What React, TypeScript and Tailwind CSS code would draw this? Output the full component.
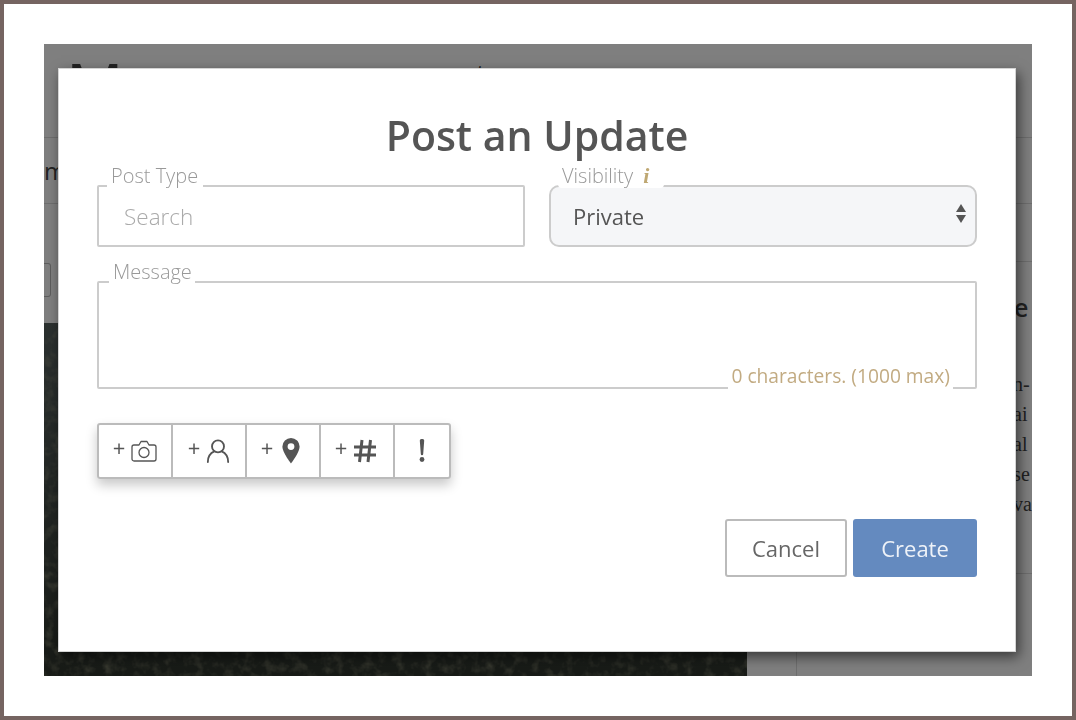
import React from 'react';

const font = { fontFamily: '"Open Sans", sans-serif' };

function PageBehind() {
  return (
    <div className="flex flex-col h-full bg-white text-[#444]">
      <div className="h-[94px] border-b border-[#ddd] flex items-start pl-[22px] pt-[2px] shrink-0">
        <span className="text-[64px] leading-[80px]">M</span>
        <span className="ml-[353px] mt-[5px] text-[24px] leading-[44px]">t</span>
      </div>
      <div className="h-[66px] border-b border-[#ddd] flex items-center overflow-hidden shrink-0">
        <span className="text-[24px] -ml-[2px] pl-[2px] w-[20px]">m</span>
      </div>
      <div className="flex flex-1 min-h-0">
        <div className="w-[703px] flex flex-col">
          <div className="h-[119px] pt-[59px]">
            <div className="w-[7px] h-[34px] border border-l-0 border-[#bbb] rounded-r-[3px]" />
          </div>
          <div className="flex-1 overflow-hidden">
            <svg width="703" height="353" className="block">
              <defs>
                <linearGradient id="shade" x1="0" y1="0" x2="0" y2="1">
                  <stop offset="0" stopColor="#586260" />
                  <stop offset="1" stopColor="#30362e" />
                </linearGradient>
                <filter id="grain">
                  <feTurbulence type="fractalNoise" baseFrequency="0.1" numOctaves="3" seed="4" />
                  <feColorMatrix values="0 0 0 0 0.36  0 0 0 0 0.36  0 0 0 0 0.24  0 0 0 1.1 -0.5" />
                </filter>
              </defs>
              <rect width="703" height="353" fill="url(#shade)" />
              <rect width="703" height="353" filter="url(#grain)" />
            </svg>
          </div>
        </div>
        <div className="w-[52px]" />
        <div className="flex-1 border-l border-[#ddd] flex flex-col">
          <div className="h-[370px] border-b border-[#ddd] flex flex-col">
            <div className="h-[58px] border-b border-[#ddd] ml-[-1px]" />
            <div className="pl-[217px] pt-[28px] text-[25px] leading-[34px] font-semibold">e</div>
            <div
              className="pl-[216px] pt-[45px] text-[20px] leading-[30px] whitespace-nowrap"
              style={{ fontFamily: '"Liberation Serif", serif' }}
            >
              <div>n-</div>
              <div>ai</div>
              <div>al</div>
              <div>se</div>
              <div>va</div>
            </div>
          </div>
        </div>
      </div>
    </div>
  );
}

function Label({ children, className }: { children: React.ReactNode; className: string }) {
  return (
    <span className={`absolute -top-[23px] h-[24px] bg-white px-1 text-[20px] leading-[24px] font-light text-[#999] whitespace-nowrap ${className}`}>
      {children}
    </span>
  );
}

function ToolCell({ plus = true, children, last }: { plus?: boolean; children: React.ReactNode; last?: boolean }) {
  return (
    <div className={`${last ? 'w-[54px]' : 'w-[74px] border-r-2 border-[#bbb]'} h-full flex items-center justify-center gap-[6px] text-[#555]`}>
      {plus && <span className="text-[22px] leading-none -mt-[9px]">+</span>}
      {children}
    </div>
  );
}

export default function App() {
  return (
    <div className="w-[1076px] h-[720px] border-4 border-[#756461] bg-white pt-[40px] pl-[40px]" style={font}>
      <div className="relative w-[988px] h-[632px] overflow-hidden">
        <PageBehind />
        <div className="absolute inset-0 bg-black/50" />
        <div className="absolute left-[14px] top-[24px] w-[958px] h-[584px] bg-white shadow-[inset_0_0_0_1px_#d4d4d4,3px_5px_12px_rgba(0,0,0,0.55)] px-[39px] pt-[40px] will-change-transform">
          <h1 className="text-center text-[41px] leading-[56px] font-semibold text-[#555] -mt-[1px]">Post an Update</h1>

          <div className="flex gap-[24px] mt-[22px]">
            <div className="relative w-[428px] h-[62px] border-2 border-[#ccc] rounded-[2px] flex items-center pl-[25px]">
              <Label className="left-[8px] w-[96px]">Post Type</Label>
              <span className="text-[22.5px] font-light text-[#aaa] pt-[1px]">Search</span>
            </div>
            <div className="relative w-[428px] h-[62px] border-2 border-[#ccc] rounded-[10px] bg-[#f5f6f8] flex items-center pl-[22px]">
              <Label className="left-[7px] w-[106px] rounded-[4px]">
                Visibility
                <i className="ml-[10px] text-[22px] text-[#bfa873] font-bold" style={{ fontFamily: '"Liberation Serif", serif' }}>i</i>
              </Label>
              <span className="text-[22px] text-[#555]">Private</span>
              <svg width="10" height="20" viewBox="0 0 10 20" className="absolute right-[9px] top-[17px]" fill="#555">
                <path d="M5 0 10 8H0Z" />
                <path d="M0 11H10L5 19Z" />
              </svg>
            </div>
          </div>

          <div className="relative w-[880px] h-[108px] border-2 border-[#ccc] rounded-[2px] mt-[34px]">
            <Label className="left-[10px] w-[86px]">Message</Label>
            <span className="absolute right-[22px] -bottom-[2px] h-[26px] bg-white px-[3px] text-[19.2px] leading-[26px] text-[#c2ab82] whitespace-nowrap">
              0 characters. (1000 max)
            </span>
          </div>

          <div className="flex w-[354px] h-[56px] mt-[34px] border-2 border-[#bbb] rounded-[3px] shadow-[0_6px_12px_rgba(0,0,0,0.22)]">
            <ToolCell>
              <svg width="26" height="22" viewBox="0 0 26 22" fill="none" stroke="#555" strokeWidth="1.3" strokeLinejoin="round">
                <path d="M3 5h5l2-3.5h6L18 5h5a2 2 0 0 1 2 2v12a2 2 0 0 1-2 2H3a2 2 0 0 1-2-2V7a2 2 0 0 1 2-2Z" />
                <circle cx="13" cy="12.5" r="5" />
              </svg>
            </ToolCell>
            <ToolCell>
              <svg width="24" height="26" viewBox="0 0 26 26" fill="none" stroke="#555" strokeWidth="2" strokeLinecap="round">
                <circle cx="13" cy="8" r="6.5" />
                <path d="M2 25c0-6 3.5-10 7-11.5M24 25c0-6-3.5-10-7-11.5" />
              </svg>
            </ToolCell>
            <ToolCell>
              <svg width="18" height="26" viewBox="0 0 18 26" className="ml-[3px] mr-[5px]">
                <path fillRule="evenodd" fill="#555" d="M9 0a8.6 8.6 0 0 1 8.6 8.6C17.6 14.5 9 25.5 9 25.5S.4 14.5.4 8.6A8.6 8.6 0 0 1 9 0Zm0 5.2a3.4 3.4 0 1 0 0 6.8 3.4 3.4 0 0 0 0-6.8Z" />
              </svg>
            </ToolCell>
            <ToolCell>
              <svg width="24" height="24" viewBox="0 0 24 24" fill="none" stroke="#555" strokeWidth="3" className="mr-[2px]">
                <path d="M9 1 6.5 23M17.5 1 15 23M1 8h22M1 16h22" />
              </svg>
            </ToolCell>
            <ToolCell plus={false} last>
              <svg width="6" height="24" viewBox="0 0 6 24" fill="#555">
                <path d="M.8 1.5A1.5 1.5 0 0 1 2.3 0h1.4a1.5 1.5 0 0 1 1.5 1.5L4.2 15a1.2 1.2 0 0 1-2.4 0Z" />
                <circle cx="3" cy="20.5" r="2.4" />
              </svg>
            </ToolCell>
          </div>

          <div className="flex justify-end gap-[6px] mt-[40px]">
            <button className="w-[122px] h-[58px] border-2 border-[#bbb] rounded-[3px] bg-white text-[22px] pt-[1px] text-[#666]">Cancel</button>
            <button className="w-[124px] h-[58px] rounded-[3px] bg-[#648abf] text-[22px] pt-[1px] text-[#eef2f8]">Create</button>
          </div>
        </div>
      </div>
    </div>
  );
}
